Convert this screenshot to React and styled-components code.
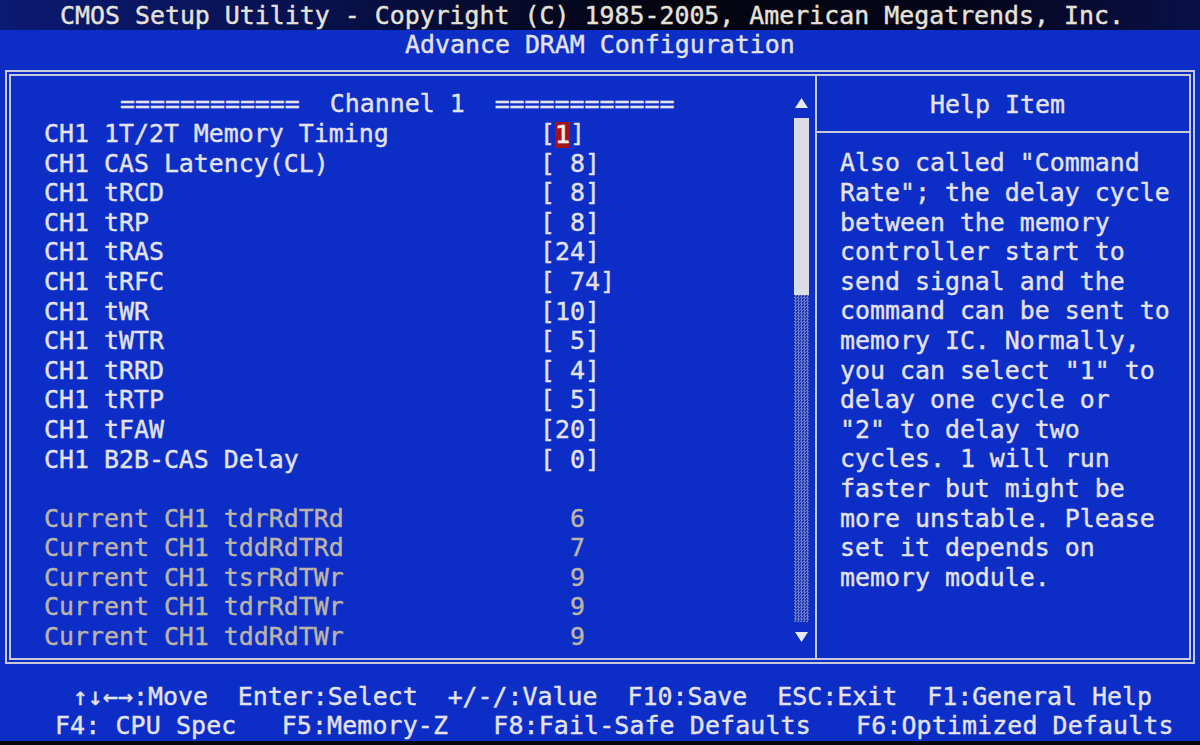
import React from "react";
import styled, { createGlobalStyle } from "styled-components";

const ROW = "29.6px";
const BLUE = "#0c2ec6";
const INK = "#e4e2ea";
const DIM = "#bcb4a8";
const LINE = "#c9c9dc";

const GlobalStyle = createGlobalStyle`
  html, body {
    margin: 0;
    padding: 0;
    background: #05060f;
  }
`;

const Screen = styled.div`
  width: 1200px;
  height: 741px;
  background: ${BLUE};
  color: ${INK};
  font-family: "DejaVu Sans Mono", "Liberation Mono", monospace;
  font-size: 24.9px;
  -webkit-text-stroke: 0.4px currentColor;
  display: flex;
  flex-direction: column;
  overflow: hidden;
`;

const Line = styled.div`
  height: ${ROW};
  line-height: ${ROW};
  white-space: pre;
  padding-left: ${(p) => p.$indent || 0}px;
  letter-spacing: ${(p) => p.$spacing || 0}px;
  color: ${(p) => (p.$dim ? DIM : "inherit")};
`;

const TitleBar = styled(Line)`
  padding-top: 1px;
  height: 28.6px;
  background: linear-gradient(90deg, #0b1a72 0%, #081250 25%, #03040e 55%, #04051a 80%, #0a1048 100%);
  color: #e6e2da;
`;

const Frame = styled.div`
  margin: 10.8px 0 0 5px;
  width: 1190px;
  height: 599px;
  box-sizing: border-box;
  border: 6px double ${LINE};
  display: grid;
  grid-template-columns: 804px 2px 1fr;
`;

const LeftPanel = styled.div`
  display: flex;
`;

const SettingsList = styled.div`
  flex: 1;
  padding: 13.4px 0 0 33px;
`;

const Row = styled.div`
  display: grid;
  grid-template-columns: 496px auto;
  height: ${ROW};
  line-height: ${ROW};
  white-space: pre;
  color: ${(p) => (p.$dim ? DIM : "inherit")};
`;

const ChannelHead = styled(Line)`
  padding-left: 76px;
`;

const Cursor = styled.span`
  display: inline-block;
  width: 15px;
  height: 26px;
  line-height: 26px;
  vertical-align: middle;
  background: #a3141a;
  color: #f4eeee;
  -webkit-text-stroke: 0.6px #f4eeee;
`;

const ScrollBar = styled.div`
  width: 15px;
  margin-right: 6px;
  padding-top: 22px;
  display: flex;
  flex-direction: column;
  align-items: center;
`;

const Arrow = styled.svg`
  display: block;
  width: 13px;
  height: 10px;
`;

const Thumb = styled.div`
  margin-top: 10px;
  width: 15px;
  height: 177px;
  background: #dcdce6;
`;

const Track = styled.div`
  width: 15px;
  height: 327px;
  margin-bottom: 10px;
  background: repeating-conic-gradient(#6d7bc4 0 25%, #1b33b8 0 50%) 0 0 / 3px 3px;
`;

const Divider = styled.div`
  background: ${LINE};
`;

const HelpPanel = styled.div`
  display: flex;
  flex-direction: column;
`;

const HelpHead = styled.div`
  height: 55px;
  line-height: 57px;
  padding-left: 113px;
  border-bottom: 2px solid ${LINE};
  white-space: pre;
`;

const HelpBody = styled.div`
  padding: 15.4px 0 0 23px;
`;

const Footer = styled.div`
  margin-top: 17.4px;
`;

const settings = [
  ["CH1 1T/2T Memory Timing", "1"],
  ["CH1 CAS Latency(CL)", "[ 8]"],
  ["CH1 tRCD", "[ 8]"],
  ["CH1 tRP", "[ 8]"],
  ["CH1 tRAS", "[24]"],
  ["CH1 tRFC", "[ 74]"],
  ["CH1 tWR", "[10]"],
  ["CH1 tWTR", "[ 5]"],
  ["CH1 tRRD", "[ 4]"],
  ["CH1 tRTP", "[ 5]"],
  ["CH1 tFAW", "[20]"],
  ["CH1 B2B-CAS Delay", "[ 0]"],
];

const current = [
  ["Current CH1 tdrRdTRd", "6"],
  ["Current CH1 tddRdTRd", "7"],
  ["Current CH1 tsrRdTWr", "9"],
  ["Current CH1 tdrRdTWr", "9"],
  ["Current CH1 tddRdTWr", "9"],
];

const help = [
  'Also called "Command',
  'Rate"; the delay cycle',
  "between the memory",
  "controller start to",
  "send signal and the",
  "command can be sent to",
  "memory IC. Normally,",
  'you can select "1" to',
  "delay one cycle or",
  '"2" to delay two',
  "cycles. 1 will run",
  "faster but might be",
  "more unstable. Please",
  "set it depends on",
  "memory module.",
];

const UpArrow = () => (
  <Arrow viewBox="0 0 13 10">
    <polygon points="6.5,0 13,10 0,10" fill="#e8e8f0" />
  </Arrow>
);

const DownArrow = () => (
  <Arrow viewBox="0 0 13 10">
    <polygon points="0,0 13,0 6.5,10" fill="#e8e8f0" />
  </Arrow>
);

export default function App() {
  return (
    <Screen>
      <GlobalStyle />
      <TitleBar $indent={60}>
        CMOS Setup Utility - Copyright (C) 1985-2005, American Megatrends, Inc.
      </TitleBar>
      <Line $indent={405}>Advance DRAM Configuration</Line>

      <Frame>
        <LeftPanel>
          <SettingsList>
            <ChannelHead>{"============  Channel 1  ============"}</ChannelHead>
            {settings.map(([label, value], i) => (
              <Row key={label}>
                <span>{label}</span>
                {i === 0 ? (
                  <span>
                    [<Cursor>{value}</Cursor>]
                  </span>
                ) : (
                  <span>{value}</span>
                )}
              </Row>
            ))}
            <Row />
            {current.map(([label, value]) => (
              <Row key={label} $dim>
                <span>{label}</span>
                <span>{"  " + value}</span>
              </Row>
            ))}
          </SettingsList>
          <ScrollBar>
            <UpArrow />
            <Thumb />
            <Track />
            <DownArrow />
          </ScrollBar>
        </LeftPanel>

        <Divider />

        <HelpPanel>
          <HelpHead>Help Item</HelpHead>
          <HelpBody>
            {help.map((text, i) => (
              <Line key={i}>{text}</Line>
            ))}
          </HelpBody>
        </HelpPanel>
      </Frame>

      <Footer>
        <Line $indent={73}>
          {"↑↓←→:Move  Enter:Select  +/-/:Value  F10:Save  ESC:Exit  F1:General Help"}
        </Line>
        <Line $indent={55} $spacing={0.13}>
          {"F4: CPU Spec   F5:Memory-Z   F8:Fail-Safe Defaults   F6:Optimized Defaults"}
        </Line>
      </Footer>
    </Screen>
  );
}
